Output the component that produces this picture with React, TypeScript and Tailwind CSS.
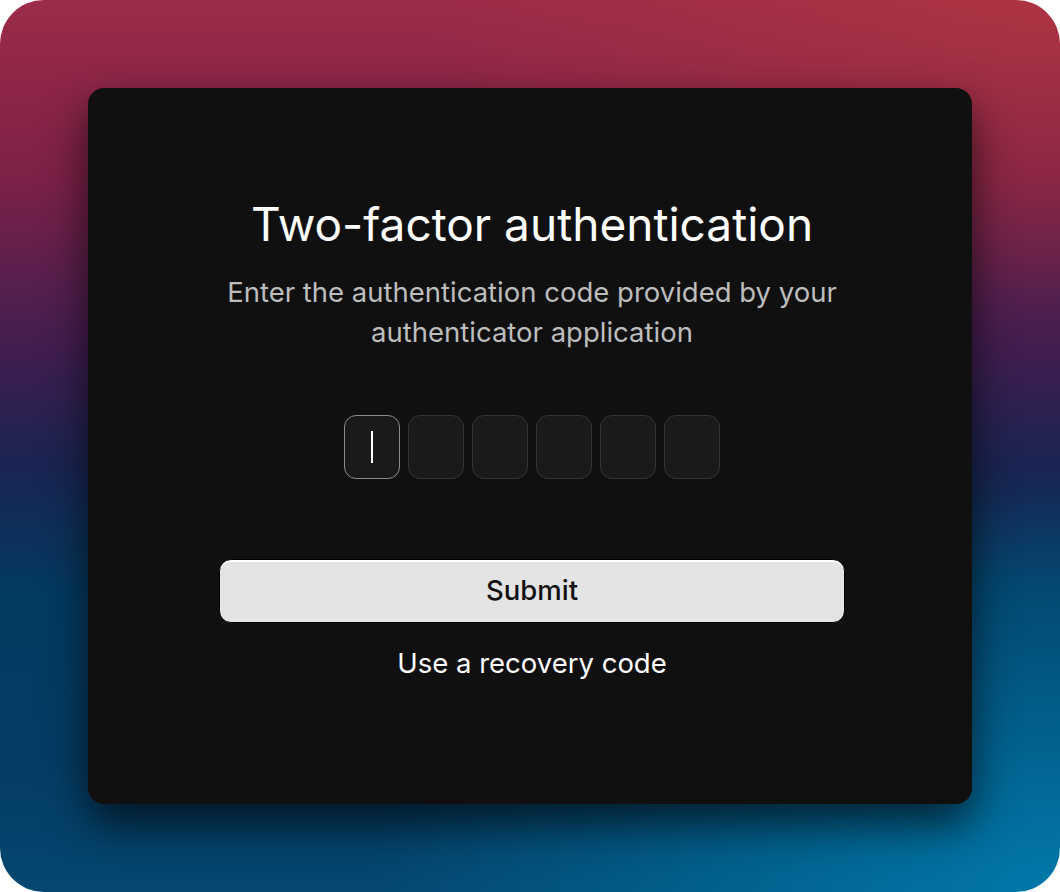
import { useState } from 'react';

const DIGITS = 6;

export default function App() {
  const [code] = useState<string[]>(Array(DIGITS).fill(''));
  const active = 0;

  return (
    <div className="min-h-screen bg-white" style={{ fontFamily: 'Inter, "Noto Sans", sans-serif' }}>
      <div className="w-[1060px] h-[892px] rounded-[44px] overflow-hidden p-[88px] bg-[radial-gradient(ellipse_60%_35%_at_100%_0%,rgba(190,60,60,0.5),transparent),radial-gradient(ellipse_65%_45%_at_100%_100%,rgba(0,130,180,0.85),transparent),linear-gradient(180deg,#9c2b48_0%,#7c2147_20%,#3e1e50_40%,#1a2452_52%,#033a60_66%,#043c64_85%,#044770_100%)]">
        <div className="h-full rounded-2xl bg-[#101010] shadow-[0_20px_44px_rgba(0,0,0,0.65)] flex flex-col items-center pt-[112px] pl-1">
          {/* ── Heading ── */}
          <h1 className="text-[46px] leading-[48px] text-white font-normal">
            Two-factor authentication
          </h1>
          <p className="mt-6 max-w-[626px] text-center text-[27.5px] leading-[40px] text-[#bdbdbd]">
            Enter the authentication code provided by your authenticator application
          </p>

          {/* ── Code inputs ── */}
          <div className="mt-[63px] flex gap-2">
            {code.map((d, i) => (
              <div
                key={i}
                className={`w-14 h-16 rounded-xl bg-[#1a1a1a] border flex items-center justify-center ${
                  i === active ? 'border-[#8c8c8c]' : 'border-[#343434]'
                }`}
              >
                {i === active ? <span className="w-[2px] h-8 bg-white" /> : d}
              </div>
            ))}
          </div>

          {/* ── Actions ── */}
          <button className="mt-20 w-[626px] h-16 rounded-xl bg-[#e4e4e4] border border-black shadow-[inset_0_2px_0_#fff] text-[27.5px] font-medium text-[#111]">
            Submit
          </button>
          <button className="mt-6 text-[27.5px] leading-8 text-white">Use a recovery code</button>
        </div>
      </div>
    </div>
  );
}
